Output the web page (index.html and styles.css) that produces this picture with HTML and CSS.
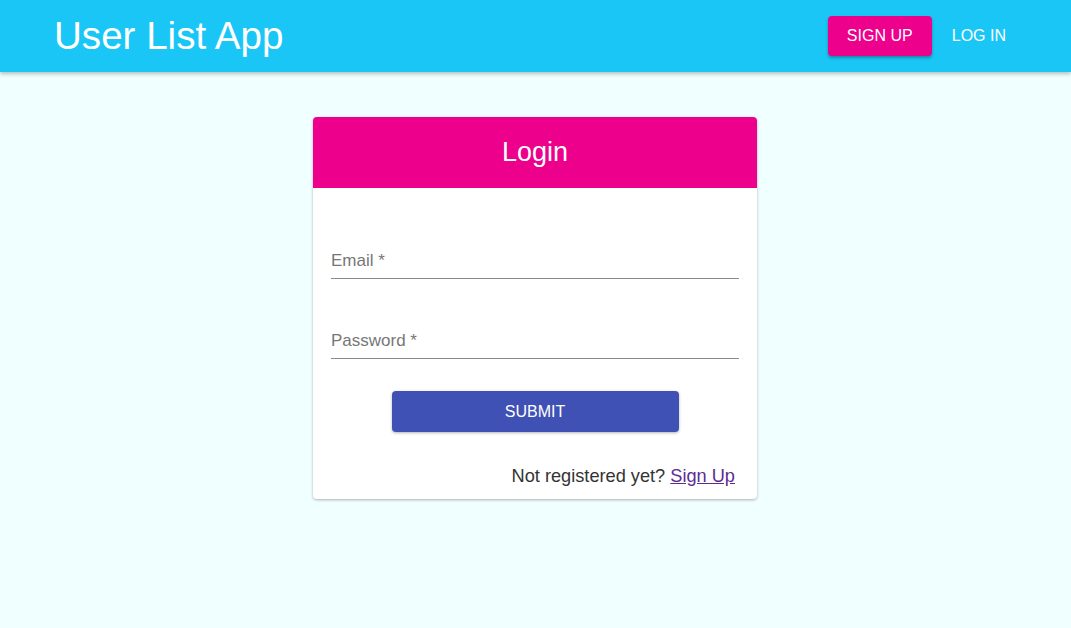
FILE: index.html
```html
<!DOCTYPE html>
<html>
<head>
<meta charset="utf-8">
<link rel="stylesheet" href="styles.css">
</head>
<body>
<header class="appbar">
  <div class="brand">User List App</div>
  <nav class="nav">
    <a class="btn-signup">SIGN UP</a>
    <a class="btn-login">LOG IN</a>
  </nav>
</header>
<main class="main">
  <section class="card">
    <div class="card-head">Login</div>
    <form class="card-body">
      <label class="field"><span class="label">Email *</span></label>
      <label class="field"><span class="label">Password *</span></label>
      <div class="actions"><button type="button" class="submit">SUBMIT</button></div>
      <p class="footer">Not registered yet? <a class="link">Sign Up</a></p>
    </form>
  </section>
</main>
</body>
</html>
```
FILE: styles.css
```css
* { box-sizing: border-box; }
html, body { margin: 0; padding: 0; }
body {
  background: #f0ffff;
  font-family: "Liberation Sans", Arial, sans-serif;
  height: 628px;
  overflow: hidden;
}
.appbar {
  height: 72px;
  background: #1ac6f5;
  display: flex;
  align-items: center;
  justify-content: space-between;
  padding: 0 55px 0 54px;
  box-shadow: 0 2px 4px rgba(0,0,0,0.25);
  position: relative;
}
.brand {
  color: #fff;
  font-size: 38.6px;
  margin-top: 0;
}
.nav {
  display: flex;
  align-items: center;
  gap: 18px;
  margin-right: 8px;
}
.btn-signup {
  background: #ec008c;
  color: #fff;
  font-size: 16px;
  height: 40px;
  width: 104px;
  display: flex;
  align-items: center;
  justify-content: center;
  border-radius: 4px;
  box-shadow: 0 2px 3px rgba(0,0,0,0.3);
}
.btn-login {
  color: #fff;
  font-size: 16px;
  padding: 0 2px;
}
.main {
  display: flex;
  justify-content: center;
  padding-top: 45px;
}
.card {
  width: 444px;
  margin-right: 1px;
  background: #fff;
  border-radius: 4px;
  box-shadow: 0 1px 3px rgba(0,0,0,0.3);
  overflow: hidden;
}
.card-head {
  background: #ec008c;
  color: #fff;
  height: 71px;
  font-size: 27px;
  display: flex;
  align-items: center;
  justify-content: center;
}
.card-body {
  padding: 0 18px 12px;
  margin: 0;
}
.field {
  display: block;
  border-bottom: 1px solid #8a8a8a;
  height: 91px;
  padding-top: 63px;
}
.field + .field { height: 80px; padding-top: 52px; }
.label {
  color: #777;
  font-size: 17px;
}
.actions {
  display: flex;
  justify-content: center;
  padding-top: 32px;
}
.submit {
  width: 287px;
  height: 41px;
  background: #3f51b5;
  color: #fff;
  border: none;
  border-radius: 4px;
  font-family: inherit;
  font-size: 16px;
  box-shadow: 0 1px 3px rgba(0,0,0,0.3);
}
.footer {
  margin: 34px 4px 0 0;
  text-align: right;
  font-size: 18.2px;
  color: #333;
}
.link {
  color: #5c2d91;
  text-decoration: underline;
}
```
